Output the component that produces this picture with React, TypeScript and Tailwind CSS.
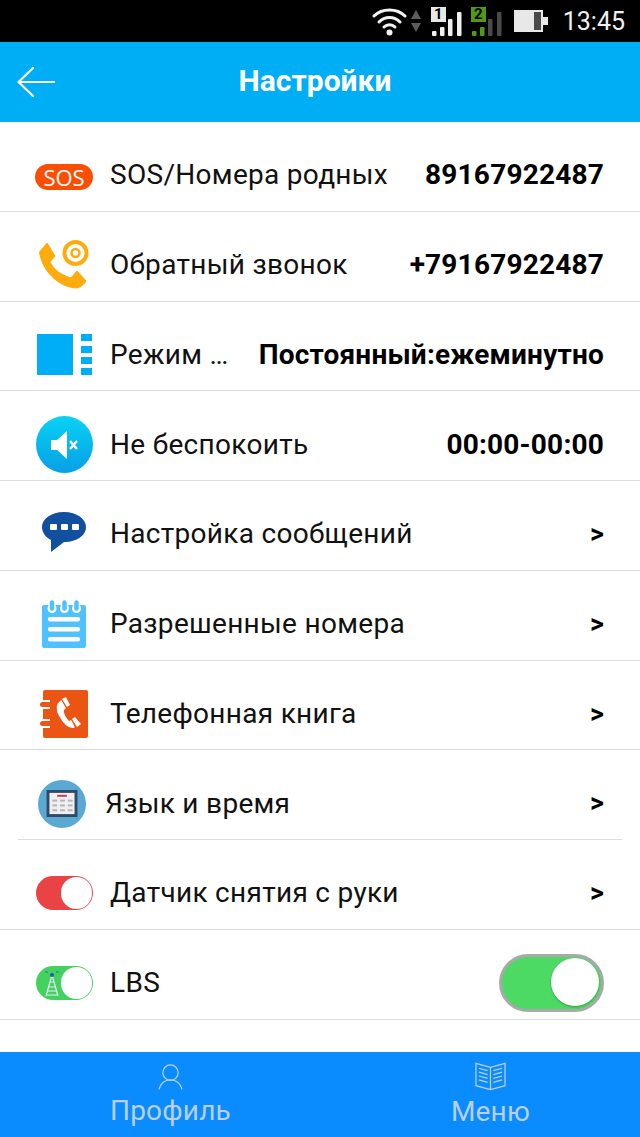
import type { ReactNode } from "react";

function WifiIcon() {
  return (
    <svg width="35" height="30" viewBox="0 0 35 30" fill="none" stroke="#f2f2f2" strokeLinecap="round">
      <path d="M2 10 C10 2 25 2 33 10" strokeWidth="3" />
      <path d="M7 16 C13 10 22 10 28 16" strokeWidth="3" />
      <path d="M12 21 C15 18 20 18 23 21" strokeWidth="3" />
      <circle cx="17.5" cy="26.5" r="3" fill="#f2f2f2" stroke="none" />
    </svg>
  );
}

function SignalIcon({ n, on, box, color, off }: { n: string; on: number; box: string; color: string; off: string }) {
  const bars = [
    { x: 1, h: 5 },
    { x: 9, h: 9 },
    { x: 17, h: 17 },
    { x: 26, h: 24 },
  ];
  return (
    <div className="relative h-[30px] w-[32px]">
      <svg width="32" height="30" viewBox="0 0 32 30" className="absolute inset-0">
        {bars.map((b, i) => (
          <rect key={b.x} x={b.x} y={30 - b.h} width="4.5" height={b.h} rx="1" fill={i < on ? color : off} />
        ))}
      </svg>
      <span className={`absolute left-0 top-[1px] h-[15px] w-[15px] text-center font-['Roboto',sans-serif] text-[15px] font-bold leading-[15px] text-black ${box}`}>
        {n}
      </span>
    </div>
  );
}

function StatusBar() {
  return (
    <div className="flex h-[42px] items-center justify-end bg-black pr-[15px]">
      <WifiIcon />
      <svg width="10" height="22" viewBox="0 0 10 22" className="ml-[4px]" fill="#5c5c5c">
        <path d="M5 0 L10 9 H0 Z" />
        <path d="M5 22 L10 13 H0 Z" />
      </svg>
      <div className="ml-[10px]">
        <SignalIcon n="1" on={4} box="bg-[#e8e8e8]" color="#f0f0f0" off="#555" />
      </div>
      <div className="ml-[8px]">
        <SignalIcon n="2" on={2} box="bg-[#4f9a0e]" color="#4f9a0e" off="#4a4a4a" />
      </div>
      <div className="ml-[11px] flex items-center">
        <div className="flex h-[22px] w-[29px] items-center justify-end bg-[#e8e8e8] pr-[2px]">
          <div className="h-[18px] w-[7px] bg-[#4a4a4a]" />
        </div>
        <div className="h-[8px] w-[5px] bg-[#e8e8e8]" />
      </div>
      <span className="ml-[15px] font-['Roboto',sans-serif] text-[25px] leading-none text-[#f0f0f0]">13:45</span>
    </div>
  );
}

function SosIcon() {
  return (
    <div className="mt-[3px] flex h-[26px] w-[58px] items-center justify-center rounded-full bg-[#fb4e05] font-['Open_Sans',sans-serif] text-[22px] leading-none text-white">
      SOS
    </div>
  );
}

function CallbackIcon() {
  return (
    <svg width="50" height="50" viewBox="0 0 50 50">
      <path
        d="M0.5 12 L8 3 L16 16 L11 22 C15 30 22 35 32 38 L38 31 L47 41 C44 46 40 48 36 48 C18 46 3 30 0.5 12 Z"
        fill="#fdab0d"
        stroke="#fdab0d"
        strokeWidth="1"
        strokeLinejoin="round"
      />
      <circle cx="36.5" cy="13" r="11" fill="none" stroke="#fdab0d" strokeWidth="4" />
      <circle cx="36.5" cy="13" r="4" fill="none" stroke="#fdab0d" strokeWidth="2.5" />
    </svg>
  );
}

function ModeIcon() {
  return (
    <div className="flex gap-[8px]">
      <div className="h-[41px] w-[36px] bg-[#00aef7]" />
      <div className="flex h-[41px] w-[11px] flex-col justify-between">
        <div className="h-[7px] bg-[#00aef7]" />
        <div className="h-[7px] bg-[#00aef7]" />
        <div className="h-[7px] bg-[#00aef7]" />
        <div className="h-[7px] bg-[#00aef7]" />
      </div>
    </div>
  );
}

function MuteIcon() {
  return (
    <div className="flex h-[57px] w-[57px] items-center justify-center rounded-full bg-gradient-to-b from-[#0bd2f4] to-[#0a9fe6]">
      <svg width="28" height="28" viewBox="0 0 28 28">
        <path d="M1 9 H7 L17 0 V28 L7 19 H1 Z" fill="#fff" />
        <path d="M20 10 L27 18 M27 10 L20 18" stroke="#fff" strokeWidth="2.4" />
      </svg>
    </div>
  );
}

function MessageIcon() {
  return (
    <svg width="46" height="42" viewBox="0 0 46 42" className="mt-[-4px]">
      <path d="M23 1 C36 1 45 8 45 16 C45 25 35 31 23 31 L10 41 L10 29 C4 26 1 21 1 16 C1 8 10 1 23 1 Z" fill="#10509f" />
      <rect x="9" y="13" width="7" height="6" rx="1" fill="#fff" />
      <rect x="20" y="13" width="7" height="6" rx="1" fill="#fff" />
      <rect x="31" y="13" width="7" height="6" rx="1" fill="#fff" />
    </svg>
  );
}

function NotesIcon() {
  return (
    <svg width="44" height="49" viewBox="0 0 44 49">
      <rect x="0" y="5" width="44" height="43" rx="2" fill="#4fc1ff" />
      <g fill="#fff">
        <rect x="5.5" y="4" width="9" height="9" rx="4.5" />
        <rect x="18" y="4" width="9" height="9" rx="4.5" />
        <rect x="30" y="4" width="9" height="9" rx="4.5" />
      </g>
      <g fill="none" stroke="#4fc1ff" strokeWidth="4.5" strokeLinecap="round">
        <path d="M10 2.5 V8.5" />
        <path d="M22.5 2.5 V8.5" />
        <path d="M34.5 2.5 V8.5" />
      </g>
      <g fill="#fff">
        <rect x="6" y="17" width="32" height="4.5" rx="2" />
        <rect x="6" y="27" width="32" height="4.5" rx="2" />
        <rect x="6" y="37" width="32" height="4.5" rx="2" />
      </g>
    </svg>
  );
}

function PhoneBookIcon() {
  return (
    <svg width="48" height="48" viewBox="0 0 48 48">
      <rect x="3" y="0" width="45" height="48" rx="2" fill="#ea5514" />
      <rect x="0" y="12" width="10" height="5" rx="2.5" fill="#ea5514" />
      <rect x="0" y="31" width="10" height="5" rx="2.5" fill="#ea5514" />
      <rect x="3" y="10" width="7" height="2" fill="#fff" />
      <rect x="3" y="17" width="7" height="2" fill="#fff" />
      <rect x="3" y="29" width="7" height="2" fill="#fff" />
      <rect x="3" y="36" width="7" height="2" fill="#fff" />
      <path
        d="M21 11 C16 15 17 21 20 26 C24 33 29 38 34 37 L31 31 L29 32 C26 29 23 25 23 20 L25 18 Z"
        fill="#fff"
        stroke="#fff"
        strokeWidth="1.5"
        strokeLinejoin="round"
      />
      <path d="M22 9 L26 7 L30 15 L27 17 Z M32 29 L35 27 L41 34 L37 37 Z" fill="#fff" />
    </svg>
  );
}

function CalendarIcon() {
  return (
    <div className="flex h-[48px] w-[48px] items-center justify-center rounded-full bg-[#5aa9d3]">
      <svg width="32" height="27" viewBox="0 0 32 28">
        <rect x="0" y="0" width="32" height="28" fill="#2f4a66" />
        <rect x="3" y="3" width="26" height="22" fill="#efefef" />
        <rect x="11" y="5" width="10" height="2" fill="#c8365a" />
        <g fill="#b4b4b4">
          <rect x="6" y="10" width="5" height="2" />
          <rect x="14" y="10" width="5" height="2" />
          <rect x="22" y="10" width="5" height="2" />
          <rect x="6" y="15" width="5" height="2" />
          <rect x="14" y="15" width="5" height="2" />
          <rect x="22" y="15" width="5" height="2" />
          <rect x="6" y="20" width="5" height="2" />
          <rect x="14" y="20" width="5" height="2" />
          <rect x="22" y="20" width="5" height="2" />
        </g>
      </svg>
    </div>
  );
}

function MiniToggle({ on, children }: { on: string; children?: ReactNode }) {
  return (
    <div className={`relative flex h-[34px] w-[57px] items-center rounded-full ${on}`}>
      {children}
      <div className="absolute right-[1px] top-[1px] h-[32px] w-[31px] rounded-full bg-white" />
    </div>
  );
}

function TowerIcon() {
  return (
    <svg width="16" height="28" viewBox="0 0 16 28" className="ml-[8px]" fill="none" stroke="#e6eef5" strokeWidth="1.2">
      <path d="M8 6 L2 27 M8 6 L14 27 M5 18 H11 M4 22 H12 M3 26 H13 M6 13 H10" />
      <circle cx="8" cy="6" r="2" fill="#1f5fa8" stroke="none" />
      <path d="M1 3 H4 M12 3 H15" stroke="#3f6f8f" />
    </svg>
  );
}

type Row = {
  icon: ReactNode;
  label: string;
  value?: string;
  right?: ReactNode;
};

const rows: Row[] = [
  { icon: <SosIcon />, label: "SOS/Номера родных", value: "89167922487" },
  { icon: <CallbackIcon />, label: "Обратный звонок", value: "+79167922487" },
  { icon: <ModeIcon />, label: "Режим …", value: "Постоянный:ежеминутно" },
  { icon: <MuteIcon />, label: "Не беспокоить", value: "00:00-00:00" },
  { icon: <MessageIcon />, label: "Настройка сообщений" },
  { icon: <NotesIcon />, label: "Разрешенные номера" },
  { icon: <PhoneBookIcon />, label: "Телефонная книга" },
];

function Chevron() {
  return <span className="text-[27px] font-bold text-black">&gt;</span>;
}

function SettingRow({ icon, label, value, right }: Row) {
  return (
    <div className="flex h-[89.75px] items-center border-b border-[#dedede] pl-[35px] pr-[36px] pt-[18px]">
      <div className="flex w-[75px] shrink-0 items-center">
        <div className="flex w-[58px] justify-center">{icon}</div>
      </div>
      <span className="whitespace-nowrap text-[28px] tracking-[0.3px] text-[#111]">{label}</span>
      <div className="ml-auto">
        {right ?? (value ? <span className="whitespace-nowrap text-[28px] font-bold tracking-[0.2px] text-black">{value}</span> : <Chevron />)}
      </div>
    </div>
  );
}

export default function App() {
  return (
    <div className="flex h-[1137px] w-[640px] flex-col overflow-hidden bg-white font-['Roboto',sans-serif]">
      <StatusBar />
      <div className="relative flex h-[80px] items-center justify-center bg-[#00aef5] pb-[3px] pr-[10px]">
        <svg width="38" height="30" viewBox="0 0 38 30" className="absolute left-[17px] top-[25px]" fill="none" stroke="#fff" strokeWidth="2.2" strokeLinecap="round" strokeLinejoin="round">
          <path d="M37 15 H1.5 M16 1 L1.5 15 L16 29" />
        </svg>
        <span className="text-[30px] font-bold text-white">Настройки</span>
      </div>

      <div className="flex-1">
        {rows.map((r) => (
          <SettingRow key={r.label} {...r} />
        ))}

        {/* this row is off by a few px in the app, with an inset divider */}
        <div className="mx-[18px] flex h-[89.75px] items-center border-b border-[#dedede] pl-[20px] pr-[18px] pt-[18px]">
          <div className="w-[67px] shrink-0">
            <CalendarIcon />
          </div>
          <span className="text-[28px] tracking-[0.3px] text-[#111]">Язык и время</span>
          <div className="ml-auto">
            <Chevron />
          </div>
        </div>

        <SettingRow icon={<MiniToggle on="bg-[#ea4345]" />} label="Датчик снятия с руки" />
        <SettingRow
          icon={
            <MiniToggle on="bg-[#43d15f]">
              <TowerIcon />
            </MiniToggle>
          }
          label="LBS"
          right={
            <div className="relative h-[58px] w-[105px] rounded-full border-[3px] border-[#a9a9a9] bg-[#4cd964]">
              <div className="absolute right-[2px] top-[1px] h-[48px] w-[48px] rounded-full bg-white shadow-[0_1px_2px_rgba(0,0,0,0.3)]" />
            </div>
          }
        />
      </div>

      <div className="flex h-[85px] bg-[#0a8cff] text-[#b9cfe6]">
        <div className="ml-[110px] flex flex-col items-center pt-[11px]">
          <svg width="25" height="28" viewBox="0 0 26 28" fill="none" stroke="#b9cfe6" strokeWidth="1.3">
            <circle cx="13" cy="9.5" r="8" />
            <path d="M1 27 C3 20 8 17 13 17 C18 17 23 20 25 27" />
          </svg>
          <span className="mt-[4px] text-[28px] leading-[32px] tracking-[0.2px]">Профиль</span>
        </div>
        <div className="ml-auto mr-[110px] flex flex-col items-center pt-[10px]">
          <svg width="31" height="29" viewBox="0 0 32 29" fill="none" stroke="#b9cfe6" strokeWidth="1.3">
            <path d="M16 5 L1 1 V24 L16 28 L31 24 V1 Z M16 5 V28" />
            <path d="M4 6 L13 8.5 M4 10 L13 12.5 M4 14 L13 16.5 M4 18 L13 20.5 M28 6 L19 8.5 M28 10 L19 12.5 M28 14 L19 16.5 M28 18 L19 20.5" />
          </svg>
          <span className="mt-[5px] text-[28px] leading-[32px] tracking-[0.2px]">Меню</span>
        </div>
      </div>
    </div>
  );
}
